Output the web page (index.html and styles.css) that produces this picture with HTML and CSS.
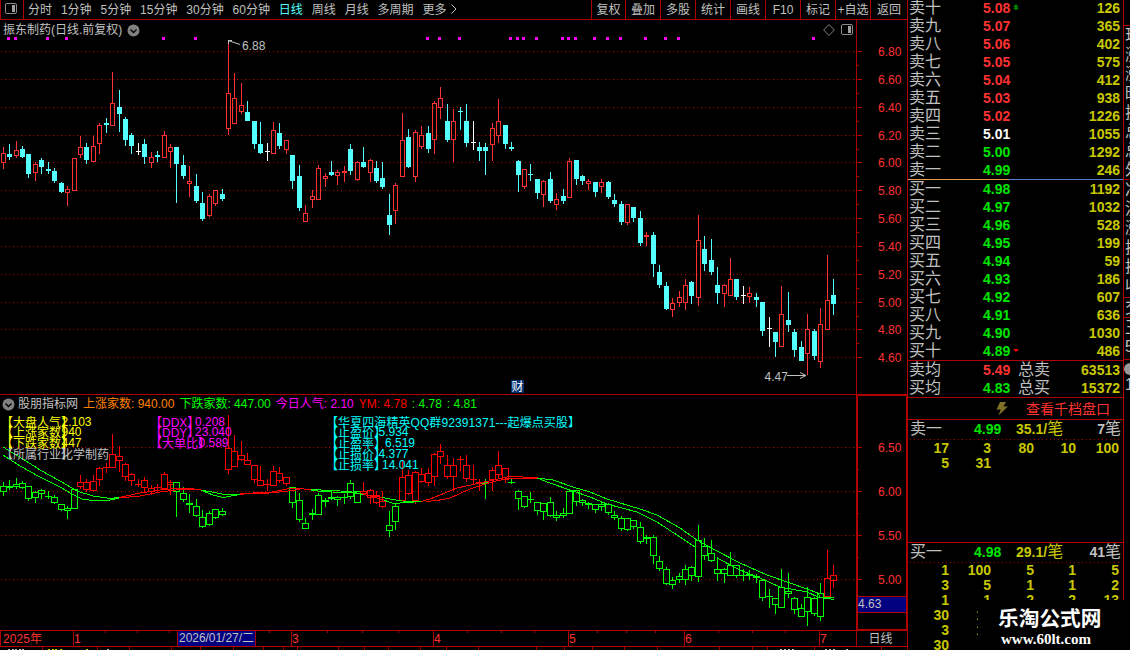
FILE: index.html
```
<!DOCTYPE html>
<html lang="zh-CN">
<head>
<meta charset="UTF-8">
<title>振东制药 日线</title>
<link rel="stylesheet" href="styles.css">
</head>
<body>

<div class="wrap">
	<div class="left">
		<div class="toolbar">
			<div class="side-btn">
				<svg width="13" height="12"><rect x="0.5" y="0.5" width="11" height="10" rx="1.5" fill="none" stroke="#8c8c8c"/><rect x="7" y="2" width="3" height="7" fill="#a0a0a0"/></svg>
			</div>
			<ul class="period">
				<li>分时</li>
				<li>1分钟</li>
				<li>5分钟</li>
				<li>15分钟</li>
				<li>30分钟</li>
				<li>60分钟</li>
				<li class="on">日线</li>
				<li>周线</li>
				<li>月线</li>
				<li>多周期</li>
				<li>更多</li>
			</ul>
			<svg class="more" width="6" height="10"><path d="M0.5 0.5L5 5L0.5 9.5" fill="none" stroke="#c0c0c0"/></svg>
			<ul class="tools">
				<li>复权</li>
				<li>叠加</li>
				<li>多股</li>
				<li>统计</li>
				<li>画线</li>
				<li>F10</li>
				<li>标记</li>
				<li>+自选</li>
				<li>返回</li>
			</ul>
		</div>

		<div class="chart price">
			<svg id="price" width="908" height="375" viewBox="0 20 908 375"></svg>
			<div class="head">
				<span>振东制药(日线.前复权)</span>
				<svg width="13" height="13"><circle cx="6.5" cy="6.5" r="6" fill="#808080"/><path d="M3.5 5.5L6.5 8.5L9.5 5.5" fill="none" stroke="#000" stroke-width="1.4"/></svg>
			</div>
			<div class="corner">
				<svg width="12" height="12"><path d="M6 0.5L11.3 6L6 11.5L0.7 6Z" fill="none" stroke="#808080"/></svg>
				<svg width="13" height="12"><rect x="0.5" y="0.5" width="11" height="10" rx="1.5" fill="none" stroke="#8c8c8c"/><rect x="7" y="2" width="3" height="7" fill="#a0a0a0"/></svg>
			</div>
		</div>

		<div class="chart ind">
			<svg id="ind" width="908" height="235" viewBox="0 395 908 235"></svg>
			<div class="head">
				<svg width="13" height="13"><circle cx="6.5" cy="6.5" r="6" fill="#808080"/><path d="M3.5 5.5L6.5 8.5L9.5 5.5" fill="none" stroke="#000" stroke-width="1.4"/></svg>
				<span class="name">股朋指标网</span>
				<span class="orange">上涨家数: 940.00</span>
				<span class="lime">下跌家数: 447.00</span>
				<span class="pink">今日人气: 2.10</span>
				<span class="red">YM: 4.78</span>
				<span class="lime">: 4.78</span>
				<span class="lime">: 4.81</span>
			</div>
		</div>

		<svg id="dates" width="908" height="20" viewBox="0 630 908 20"></svg>
	</div>

	<div class="panel">
		<div class="book" id="sell"></div>
		<div class="split"></div>
		<div class="book" id="buy"></div>
		<div class="avg">
			<div class="row"><i>卖均</i><b class="up">5.49</b><i>总卖</i><b class="vol">63513</b></div>
			<div class="row"><i>买均</i><b class="down">4.83</b><i>总买</i><b class="vol">15372</b></div>
		</div>
		<div class="link">
			<svg width="12" height="14"><path d="M4 0H10L7.5 4.5H12L2.5 13.5L4.8 7.5H0.5Z" fill="#807028"/></svg>
			<span>查看千档盘口</span>
		</div>
		<div class="queue">
			<div class="qhead"><i>卖一</i><b class="down">4.99</b><b class="each">35.1/<i>笔</i></b><b class="cnt">7<i>笔</i></b></div>
			<div class="nums" id="q1"></div>
		</div>
		<div class="queue last">
			<div class="qhead"><i>买一</i><b class="down">4.98</b><b class="each">29.1/<i>笔</i></b><b class="cnt">41<i>笔</i></b></div>
			<div class="nums" id="q2"></div>
		</div>
	</div>

	<div class="edge">
		<div class="g1"><p>现</p><p>涨</p><p>涨</p><p>昨</p><p>换</p><p>总</p><p>总</p><p>外</p></div>
		<div class="g2"><p>净</p><p>流</p><p>涨</p><p>换</p><p>换</p><p>收</p></div>
		<div class="g3"><p>交</p></div>
		<div class="g4"><p>王</p><p>5</p></div>
		<div class="g5"><svg width="12" height="12"><circle cx="6" cy="6" r="6" fill="#999"/></svg><p>1</p></div>
	</div>
</div>

<div class="mark">
	<strong>乐淘公式网</strong>
	<em>www.60lt.com</em>
</div>

<script src="chart.js"></script>
</body>
</html>
```
FILE: styles.css
```
* {
	margin: 0;
	padding: 0;
	box-sizing: border-box;
}
body {
	width: 1130px;
	height: 650px;
	overflow: hidden;
	background: #000;
	color: #c0c0c0;
	font: 12px/18px "Liberation Sans", "Noto Sans CJK SC", sans-serif;
}
li {
	list-style: none;
}
i {
	font-style: normal;
	font-weight: normal;
}
svg {
	display: block;
}
.wrap {
	display: flex;
	height: 650px;
}
.left {
	width: 908px;
}

/* 顶部工具栏 */
.toolbar {
	display: flex;
	height: 20px;
	line-height: 20px;
	border-bottom: 1px solid #b00000;
	border-right: 1px solid #b00000;
}
.side-btn {
	width: 24px;
	padding: 3px 0 0 4px;
	border-left: 1px solid #b00000;
	border-right: 1px solid #b00000;
}
.period {
	display: flex;
	gap: 8.9px;
	padding-left: 4px;
	white-space: nowrap;
}
.period .on {
	color: #54ffff;
}
.more {
	margin: 4px 0 0 5px;
}
.tools {
	display: grid;
	grid-template-columns: 34px repeat(7, 35px) 37px;
	height: 19px;
	margin-left: auto;
	text-align: center;
	white-space: nowrap;
}
.tools li {
	height: 19px;
	border-left: 1px solid #b00000;
}

/* 图表 */
.chart {
	position: relative;
}
.chart .head {
	position: absolute;
	left: 3px;
	top: 0;
	display: flex;
	align-items: center;
	gap: 5px;
	line-height: 20px;
	white-space: nowrap;
}
.ind .head {
	left: 2px;
	top: -1px;
	gap: 5px;
}
.ind .name {
	margin-left: -2px;
}
.corner {
	position: absolute;
	left: 823px;
	top: 4px;
	display: flex;
	gap: 6px;
}
.orange { color: #ff8000; }
.lime { color: #00ff00; }
.pink { color: #ff00ff; }
.red { color: #ff0000; }
svg text {
	font-size: 12px;
}

/* 盘口 */
.panel {
	width: 216px;
	border-right: 1px solid #b00000;
	font-size: 14px;
	color: #c8c800;
}
.panel i {
	font-size: 16px;
	color: #c0c0c0;
}
.row {
	display: grid;
	grid-template-columns: 74px 35px 40px 1fr;
	height: 18px;
	padding: 0 3px 0 1px;
	line-height: 18px;
	white-space: nowrap;
}
.row .vol {
	text-align: right;
}
#sell {
	height: 179px;
	overflow: hidden;
}
#sell .row {
	position: relative;
	top: -1px;
}
.split {
	height: 1px;
	background: linear-gradient(90deg, #e0a050 101px, #5080d0 101px);
}
#buy {
	height: 180px;
}
.up { color: #ff3232; }
.down { color: #00e600; }
.flat { color: #fff; }
.row svg {
	display: inline-block;
	margin-left: 3px;
	vertical-align: 3px;
}
.avg {
	height: 38px;
	border-top: 1px solid #b00000;
	border-bottom: 1px solid #b00000;
}
.link {
	display: flex;
	align-items: center;
	gap: 18px;
	height: 22px;
	padding-left: 88px;
	border-bottom: 1px solid #b00000;
	color: #ff3232;
}
.queue {
	height: 123px;
	border-bottom: 1px solid #b00000;
}
.queue.last {
	border: 0;
}
.queue.last .nums {
	padding-top: 0;
}
.qhead {
	display: grid;
	grid-template-columns: 64px 42px 60px 1fr;
	height: 20px;
	margin: 0 2px;
	line-height: 18px;
	background: repeating-linear-gradient(90deg, #b00000 0 1px, transparent 1px 4px) 0 19px / 100% 1px no-repeat;
	white-space: nowrap;
}
.qhead .each i {
	color: #c8c800;
}
.qhead .cnt {
	color: #c0c0c0;
	text-align: right;
}
.nums {
	display: grid;
	grid-template-columns: 41px 42px 43px 42px 43px;
	line-height: 15px;
	padding-top: 1px;
	text-align: right;
	font-weight: bold;
}

/* 右侧被截断的一栏 */
.edge {
	width: 6px;
	overflow: hidden;
	font-size: 16px;
	line-height: 19.2px;
}
.edge p {
	margin-left: 1px;
}
.g1 {
	height: 155px;
	margin-top: 25px;
	border-top: 1px solid #b00000;
	border-bottom: 1px solid #b00000;
}
.g2 {
	height: 118px;
	border-bottom: 1px solid #b00000;
}
.g3 {
	height: 20px;
	border-bottom: 1px solid #b00000;
}
.g4 {
	height: 42px;
	border-bottom: 1px solid #b00000;
}
.g5 {
	padding-top: 3px;
}

.mark {
	position: absolute;
	left: 978px;
	top: 600px;
	width: 152px;
	height: 50px;
	padding: 5px 0 0 20px;
	background: #000;
	color: #fff;
}
.mark strong,
.mark em {
	display: block;
	white-space: nowrap;
}
.mark strong {
	font-size: 20.7px;
	line-height: 28px;
}
.mark em {
	padding-left: 3px;
	font: bold 15px/12px "Liberation Serif", serif;
}
```
FILE: chart.js
```
// x, 最高, 实体上沿, 实体下沿, 最低, 颜色(r涨 c跌 w平)
var data = [
[3,147,153,163,169,'r'],[9,144,154,157,160,'c'],[16,141,150,156,158,'r'],[22,146,149,157,158,'c'],[28,154,154,174,178,'c'],
[35,162,164,173,181,'r'],[41,158,160,167,174,'c'],[48,162,169,171,174,'c'],[54,168,171,181,183,'c'],[61,182,183,192,193,'c'],
[67,186,189,193,206,'r'],[74,158,158,191,191,'r'],[80,136,147,155,158,'r'],[86,143,147,160,164,'c'],[93,136,146,162,162,'r'],
[99,123,125,144,154,'r'],[106,118,123,125,133,'c'],[112,72,103,126,126,'r'],[119,90,107,114,132,'c'],[125,117,119,140,146,'c'],
[131,133,135,146,154,'c'],[138,143,151,152,155,'w'],[144,139,144,157,164,'c'],[151,152,157,163,168,'r'],[157,151,155,157,162,'c'],
[164,131,135,158,158,'r'],[170,144,147,152,168,'r'],[176,147,147,164,203,'c'],[183,155,165,176,179,'c'],[189,166,181,184,197,'r'],
[196,174,186,201,203,'c'],[202,192,203,219,221,'c'],[209,194,196,216,217,'r'],[215,190,190,204,206,'r'],[222,189,194,199,201,'c'],
[228,41,93,129,135,'r'],[234,73,98,124,124,'r'],[241,83,105,112,114,'r'],[247,101,112,121,121,'c'],[254,121,121,144,149,'c'],
[260,122,144,153,154,'c'],[267,143,151,152,161,'w'],[273,122,130,154,154,'r'],[279,123,133,146,149,'c'],[286,140,140,150,154,'r'],
[292,155,155,181,189,'c'],[299,165,176,208,211,'c'],[305,205,213,222,222,'r'],[312,190,196,200,208,'r'],[318,165,168,200,200,'r'],
[325,173,176,179,187,'r'],[331,161,172,175,176,'c'],[337,170,172,176,185,'r'],[344,166,171,173,182,'r'],[350,144,149,171,175,'c'],
[357,161,162,180,181,'r'],[363,147,162,167,168,'c'],[370,159,160,173,182,'r'],[376,161,168,181,183,'c'],[382,162,178,187,189,'c'],
[389,194,215,225,235,'c'],[395,183,185,211,224,'r'],[402,113,140,177,177,'r'],[408,129,137,167,168,'c'],[415,130,132,177,182,'r'],
[421,126,135,147,149,'r'],[428,126,133,149,153,'c'],[434,101,103,140,154,'r'],[440,87,98,108,119,'r'],[447,104,121,140,142,'c'],
[453,109,121,140,162,'r'],[460,107,111,112,130,'c'],[466,104,121,143,147,'c'],[473,121,142,143,150,'w'],[479,142,147,151,161,'c'],
[485,143,147,151,175,'c'],[492,123,128,145,161,'r'],[498,99,121,136,143,'r'],[505,125,125,144,149,'c'],[511,142,147,149,151,'c'],
[518,160,161,175,192,'c'],[524,169,169,187,189,'r'],[530,164,174,175,181,'c'],[537,179,179,193,199,'c'],[543,180,181,195,207,'r'],
[550,172,179,201,203,'c'],[556,193,199,205,210,'r'],[563,189,196,201,204,'c'],[569,158,161,198,198,'r'],[576,160,160,179,185,'c'],
[582,175,176,181,185,'c'],[588,179,181,184,190,'r'],[595,182,182,192,197,'c'],[601,179,182,187,193,'r'],[608,181,182,197,199,'c'],
[614,194,200,204,207,'c'],[621,201,204,222,225,'c'],[627,204,204,223,225,'r'],[633,207,207,218,222,'c'],[640,211,218,243,246,'c'],
[646,232,235,237,246,'r'],[653,232,235,264,277,'c'],[659,265,272,285,288,'c'],[666,282,286,309,310,'c'],[672,298,303,310,317,'r'],
[679,291,297,303,307,'r'],[685,279,285,303,310,'r'],[691,281,282,296,304,'c'],[698,215,240,298,306,'r'],[704,236,249,264,271,'c'],
[711,239,260,272,275,'c'],[717,267,285,293,304,'c'],[724,284,285,294,307,'r'],[730,258,279,296,296,'r'],[736,279,279,297,300,'c'],
[743,286,295,296,304,'w'],[749,287,293,297,303,'r'],[756,293,297,300,307,'c'],[762,302,302,331,336,'c'],[769,317,328,329,347,'w'],
[775,332,332,342,357,'c'],[781,286,314,347,347,'r'],[788,292,320,325,332,'c'],[794,329,332,350,357,'c'],[801,341,347,361,361,'c'],
[807,314,329,354,375,'r'],[814,329,331,356,360,'c'],[820,308,324,362,368,'r'],[827,255,300,330,330,'r'],[833,279,295,304,315,'c']
];
var LINE = '#b00000';

function rect(x, y, w, h, c) {
    return '<rect x="' + x + '" y="' + y + '" width="' + w + '" height="' + h + '" fill="' + c + '" shape-rendering="crispEdges"/>';
}
function box(x, y, w, h, c) {
    if (h < 3) return rect(x, y, w, h, c);
    return '<rect x="' + (x + 0.5) + '" y="' + (y + 0.5) + '" width="' + (w - 1) + '" height="' + (h - 1) + '" fill="none" stroke="' + c + '" shape-rendering="crispEdges"/>';
}
function text(x, y, s, c, len) {
    return '<text x="' + x + '" y="' + y + '" fill="' + c + '"' + (len ? ' textLength="' + len + '"' : '') + '>' + s + '</text>';
}
function path(d, c) {
    return '<path d="' + d + '" fill="none" stroke="' + c + '"/>';
}
// 均线不做平滑
function line(d, c) {
    return '<path d="' + d + '" fill="none" stroke="' + c + '" shape-rendering="crispEdges"/>';
}
function dots(y) {
    return '<path d="M1 ' + (y + 0.5) + 'H856" stroke="' + LINE + '" stroke-dasharray="1 3" shape-rendering="crispEdges"/>';
}

drawPrice();
drawInd();
drawDates();
drawBook();

function drawPrice() {
    var s = '', i;
    var ys = [51, 79, 107, 135, 162, 190, 218, 246, 274, 302, 329, 357];
    s += rect(856, 20, 1, 375, LINE) + rect(907, 20, 1, 375, LINE) + rect(0, 394, 908, 1, LINE);
    for (i = 0; i < ys.length; i++) {
        s += dots(ys[i]) + rect(857, ys[i], 5, 1, LINE);
        if (i < ys.length - 1) s += rect(857, ys[i] + 14, 2, 1, LINE);
        s += text(878, ys[i] + 5, (6.8 - i * 0.2).toFixed(2), '#ff3232');
    }
    var marks = [7,14,46,65,162,194,426,438,458,509,516,522,535,561,567,574,593,606,619,644,664,677,812];
    for (i = 0; i < marks.length; i++) {
        s += rect(marks[i], 37, 3, 3, '#ff00ff');
    }
    for (i = 0; i < data.length; i++) {
        var d = data[i], c = { r: '#ff3232', c: '#54ffff', w: '#ffffff' }[d[5]];
        s += rect(d[0], d[1], 1, d[2] - d[1], c) + rect(d[0], d[3], 1, d[4] - d[3], c);
        s += d[5] == 'r' ? box(d[0] - 2, d[2], 5, d[3] - d[2], c) : rect(d[0] - 2, d[2], 5, d[3] - d[2], c);
    }
    s += path('M228.5 44V40.5H232M228 40.5L240 44.5', '#c0c0c0') + text(242, 50, '6.88', '#c0c0c0');
    s += path('M787 375.5H805M800 372.5L806 375.5L800 378.5', '#c0c0c0') + text(764.5, 381, '4.47', '#c0c0c0');
    s += rect(511, 380, 13, 13, '#003070') + text(511.5, 391, '财', '#ffffff');
    document.getElementById('price').innerHTML = s;
}

function isRed(x) {
    return (x >= 80 && x <= 170) || (x >= 228 && x <= 286) || (x >= 363 && x <= 382) ||
        (x >= 402 && x <= 505 && x != 485) || x >= 827;
}
function low(y) {
    return Math.round(491.5 + (y - 162.5) * 0.631);
}

function drawInd() {
    var s = '', i, R = '#ff0000', G = '#00ff00';
    for (i = 0; i < 4; i++) {
        var y = 447 + i * 44;
        s += dots(y) + rect(857, y, 5, 1, LINE) + text(878, y + 5, (6.5 - i * 0.5).toFixed(2), '#ff3232');
        if (i < 3) s += rect(857, y + 22, 2, 1, LINE);
    }
    for (i = 0; i < data.length; i++) {
        var d = data[i], c = isRed(d[0]) ? R : G;
        var h = low(d[1]), t = low(d[2]), b = low(d[3]), l = low(d[4]);
        s += rect(d[0], h, 1, t - h, c) + rect(d[0], b, 1, Math.max(0, l - b), c);
        s += box(d[0] - 3, t, 7, Math.max(1, b - t), c);
    }
    // 两条均线
    s += line('M3 447L23 459L40 470L60 481L77 491L93 496L110 498.5L119 497.5', G);
    s += line('M3 455L20 466L40 477L60 487L72 494L82 499L92 500.5H108L119 498', G);
    s += line('M119 497.5L140 493L160 490L175 488.5H190L201 490', R);
    s += line('M119 498L140 496L160 492L180 489.5L201 490', R);
    s += line('M201 490L225 494.5L240 494.5', G) + line('M203 491L213 495L223 497.5L240 494.5', G);
    s += line('M240 494.5L258 492.5L272 492L287 489L300 488.5L311 490', R) + line('M240 494L265 493.5L288 491L300 489.5', R);
    s += line('M311 489.5L350 491.5L363 494.5', G) + line('M311 490.5L332 492L350 492.5L366 495', G);
    s += line('M363 494.5L382 497.5', R) + line('M366 495L384 500', R);
    s += line('M382 497.5L393 499.5L402 501L421 501.5', G) + line('M384 500L393 503.5L407 502.5L421 501.5', G);
    s += line('M421 501.5L430 499L445 493L457 488L480 483L503 478L511 476L523 477L538 478', R);
    s += line('M426 501.5L437 500.5L450 498L470 489L490 482.5L507 478.5H538', R);
    s += line('M537 478L553 480L573 487L590 492L607 499L640 509L657 515L680 528L697 540L713 549L740 563L767 575L793 584L818 593L820 597.5H834', G);
    s += line('M537 478L550 483L570 490L590 497L607 504L637 512L657 522L680 537L695 547', G);
    s += line('M717 558L740 570L760 578L780 587L807 592L818 597L834 599.5', G);

    var Y = '#ffff00', M = '#ff00ff', C = '#00ffff', W = '#c0c0c0';
    s += text(1, 427, '【大盘人气】', Y) + text(61.5, 426, '2.103', Y);
    s += text(1, 437, '【上涨家数】', Y) + text(61.5, 436, '940', Y);
    s += text(1, 448, '【下跌家数】', Y) + text(61.5, 447, '447', Y);
    s += text(1, 459, '【所属行业】', W) + text(61, 459, '化学制药', W);
    s += text(150, 427, '【DDX】', M) + text(195, 426, '0.208', M);
    s += text(150, 437, '【DDY】', M) + text(195, 436, '23.040', M);
    s += text(150, 448, '【大单比】', M) + text(198.5, 447, '0.589', M);
    s += text(326, 427, '【华夏四海精英QQ群92391371---起爆点买股】', C, 254);
    s += text(326, 437, '【止盈价】', C) + text(378.5, 436, '5.934', C);
    s += text(326, 448, '【止盈率】', C) + text(385, 447, '6.519', C);
    s += text(326, 459, '【止损价】', C) + text(378.5, 458, '4.377', C);
    s += text(326, 470, '【止损率】', C) + text(382, 469, '14.041', C);

    s += rect(856, 395, 2, 235, LINE) + rect(906, 395, 2, 235, LINE) + rect(856, 395, 52, 1, LINE) + rect(856, 629, 52, 1, LINE);
    s += rect(858, 596, 48, 17, LINE) + rect(858, 597, 48, 15, '#000080') + text(858, 608, '4.63', '#c0c0c0');
    document.getElementById('ind').innerHTML = s;
}

function drawDates() {
    var i, s = rect(0, 630, 908, 1, LINE) + rect(0, 646, 908, 1, LINE) + rect(0, 630, 1, 17, LINE) + rect(856, 630, 1, 17, LINE) + rect(907, 630, 1, 20, LINE);
    var months = [[73, 1], [291, 3], [433, 4], [568, 5], [684, 6], [819, 7]];
    var ticks = [105,137,169,269,327,362,398,467,501,534,597,626,655,718,752,785];
    var seps = [42,97,129,171,200,233,263,283,297,338,364,388,420,446,478,536,564,592,624,657,719,752,767,814,881];
    for (i = 0; i < months.length; i++) {
        s += rect(months[i][0], 630, 1, 17, LINE) + text(months[i][0] + 1, 643, months[i][1], '#ff3232');
    }
    for (i = 0; i < ticks.length; i++) s += rect(ticks[i], 631, 1, 2, LINE);
    for (i = 0; i < seps.length; i++) s += rect(seps[i], 647, 1, 3, LINE);
    s += text(3, 643, '2025年', '#ff3232', 39);
    s += rect(177, 631, 79, 15, LINE) + rect(178, 631, 77, 15, '#000080') + text(179, 642, '2026/01/27/二', '#c0c0c0', 75);
    s += text(868.5, 643, '日线', '#c0c0c0');
    // 下一行只露出顶部
    var bits = [8,12,15,19,22,107,780,784,788,792,825,829,833,846];
    for (i = 0; i < bits.length; i++) s += rect(bits[i], 649, 2, 1, '#c0c0c0');
    bits = [48,52,55,60,86];
    for (i = 0; i < bits.length; i++) s += rect(bits[i], 649, 2, 1, '#c8c800');
    document.getElementById('dates').innerHTML = s;
}

function drawBook() {
    var num = '一二三四五六七八九十';
    var sell = [246, 1292, 1055, 1226, 938, 412, 575, 402, 365, 126];
    var buy = [1192, 1032, 528, 199, 59, 186, 607, 636, 1030, 486];
    var up = '<svg width="6" height="6"><path d="M3 0L6 3H0ZM3 2L6 5H4V6H2V5H0Z" fill="#008000"/></svg>';
    var dn = '<svg width="6" height="4"><path d="M0 0H6L3 3Z" fill="#ff0000"/></svg>';
    var s = '', b = '', i, p;
    for (i = 9; i >= 0; i--) {
        p = 4.99 + i * 0.01;
        s += '<div class="row"><i>卖' + num[i] + '</i><b class="' + (i > 2 ? 'up' : i == 2 ? 'flat' : 'down') + '">' + p.toFixed(2) + (i == 9 ? up : '') + '</b><i></i><b class="vol">' + sell[i] + '</b></div>';
    }
    for (i = 0; i < 10; i++) {
        p = 4.98 - i * 0.01;
        b += '<div class="row"><i>买' + num[i] + '</i><b class="down">' + p.toFixed(2) + (i == 9 ? dn : '') + '</b><i></i><b class="vol">' + buy[i] + '</b></div>';
    }
    document.getElementById('sell').innerHTML = s;
    document.getElementById('buy').innerHTML = b;
    fill('q1', [17, 3, 80, 10, 100, 5, 31]);
    fill('q2', [1, 100, 5, 1, 5, 3, 5, 1, 1, 2, 1, 1, 2, 2, 13, 30, 11, '', '', '', 3, 11, '', '', '', 30]);
}
function fill(id, arr) {
    document.getElementById(id).innerHTML = '<span>' + arr.join('</span><span>') + '</span>';
}
```
